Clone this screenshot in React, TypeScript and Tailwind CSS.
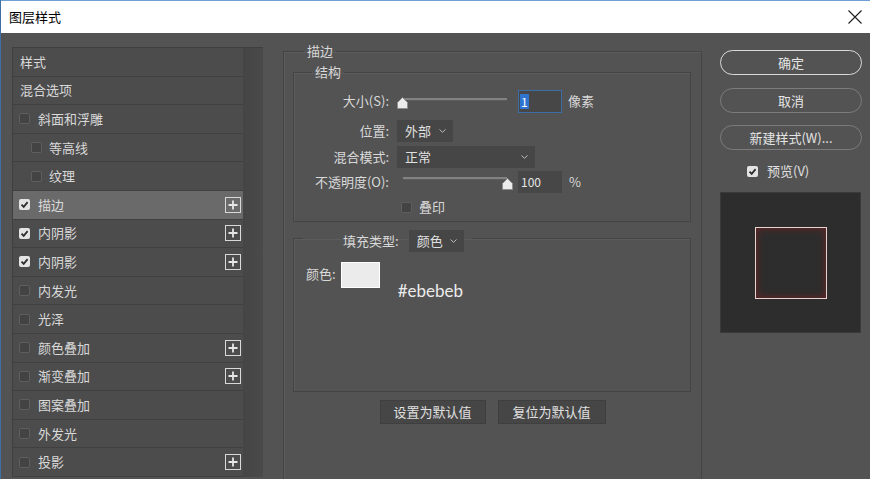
import React from 'react';

type Effect = {
  label: string;
  head?: boolean;
  checked?: boolean;
  indent?: boolean;
  plus?: boolean;
  active?: boolean;
};

const EFFECTS: Effect[] = [
  { label: '样式', head: true },
  { label: '混合选项', head: true },
  { label: '斜面和浮雕' },
  { label: '等高线', indent: true },
  { label: '纹理', indent: true },
  { label: '描边', checked: true, plus: true, active: true },
  { label: '内阴影', checked: true, plus: true },
  { label: '内阴影', checked: true, plus: true },
  { label: '内发光' },
  { label: '光泽' },
  { label: '颜色叠加', plus: true },
  { label: '渐变叠加', plus: true },
  { label: '图案叠加' },
  { label: '外发光' },
  { label: '投影', plus: true },
];

const CheckBox: React.FC<{ checked?: boolean }> = ({ checked }) =>
  checked ? (
    <span className="flex h-[11px] w-[11px] shrink-0 items-center justify-center rounded-[2px] bg-[#e4e4e4]">
      <svg width="9" height="9" viewBox="0 0 9 9">
        <path d="M1.5 4.6 L3.7 6.8 L7.6 2.2" fill="none" stroke="#2e2e2e" strokeWidth="1.8" />
      </svg>
    </span>
  ) : (
    <span className="block h-[11px] w-[11px] shrink-0 rounded-[2px] border border-[#5e5e5e] bg-[#434343]" />
  );

const PlusBox = () => (
  <span className="flex h-[16px] w-[16px] items-center justify-center border-[1.5px] border-[#d8d8d8]">
    <svg width="10" height="10" viewBox="0 0 10 10">
      <path d="M5 0.5 V9.5 M0.5 5 H9.5" stroke="#e6e6e6" strokeWidth="1.8" />
    </svg>
  </span>
);

const Chevron = () => (
  <svg width="7" height="4" viewBox="0 0 7 4">
    <path d="M0.5 0.5 L3.5 3.3 L6.5 0.5" fill="none" stroke="#bdbdbd" strokeWidth="1" />
  </svg>
);

const Thumb = () => (
  <svg width="11" height="12" viewBox="0 0 11 12">
    <polygon points="5.5,0.5 10.5,5.5 10.5,11.5 0.5,11.5 0.5,5.5" fill="#ebebeb" stroke="#8a8a8a" strokeWidth="0.8" />
  </svg>
);

const Dropdown: React.FC<{ text: string; width: string }> = ({ text, width }) => (
  <div className={`flex h-[22px] items-center justify-between bg-[#464646] pl-[8px] pr-[7px] text-[13px] text-[#e0e0e0] ${width}`}>
    <span>{text}</span>
    <Chevron />
  </div>
);

const App: React.FC = () => {
  return (
    <div className="flex h-[479px] w-[870px] flex-col overflow-hidden border-l border-[#3f6fa3] bg-[#535353] font-['Noto_Sans_CJK_SC',sans-serif] text-[13px] leading-[18px] text-[#d9d9d9]">
      {/* title bar */}
      <div className="flex h-[33px] shrink-0 items-center justify-between border-t border-[#6f9fd3] bg-white pl-[8px] pr-[8px]">
        <span className="text-[13px] text-black">图层样式</span>
        <svg width="14" height="14" viewBox="0 0 14 14">
          <path d="M0.5 0.5 L13.5 13.5 M13.5 0.5 L0.5 13.5" stroke="#1f1f1f" strokeWidth="1.1" />
        </svg>
      </div>

      <div className="flex min-h-0 flex-1 items-start">
        {/* effects list */}
        <div className="ml-[11px] mt-[14px] flex w-[251px] border-l border-t border-[#3f3f3f] bg-[#474747]">
          <div className="w-[230px]">
            {EFFECTS.map((e, i) => (
              <div
                key={i}
                className={`flex h-[28.6px] items-center border-b border-[#404040] ${
                  e.active ? 'bg-[#6a6a6a]' : 'bg-[#4c4c4c]'
                } ${e.head ? 'pl-[7px]' : e.indent ? 'pl-[18px]' : 'pl-[6px]'}`}
              >
                {!e.head && <CheckBox checked={e.checked} />}
                <span className={e.head ? '' : e.indent ? 'ml-[7px]' : 'ml-[8px]'}>{e.label}</span>
                {e.plus && (
                  <span className="ml-auto mr-[2px]">
                    <PlusBox />
                  </span>
                )}
              </div>
            ))}
          </div>
          <div className="w-[20px] bg-gradient-to-r from-[#454545] to-[#4a4a4a]" />
        </div>

        {/* settings */}
        <fieldset className="ml-[20px] mt-[9px] h-[470px] w-[419px] shrink-0 border border-[#444444] shadow-[inset_1px_1px_0_#5c5c5c]">
          <legend className="ml-[20px] px-[3px] text-[13px] leading-[18px]">描边</legend>

          <fieldset className="ml-[9px] mt-[3px] w-[398px] border border-[#444444] pb-[6px] shadow-[inset_1px_1px_0_#5c5c5c]">
            <legend className="ml-[18px] px-[3px] leading-[18px]">结构</legend>

            {/* size */}
            <div className="mt-[9px] flex h-[23px] items-start">
              <span className="w-[95px] pt-[2px] text-right">大小(S):</span>
              <div className="ml-[8px] flex h-full items-start">
                <div className="relative h-full w-[121px]">
                  <div className="absolute left-[5px] top-[8px] h-[3px] w-[105px] border-b border-[#5c5c5c] bg-[#828282]" />
                  <div className="absolute left-0 top-[7px]">
                    <Thumb />
                  </div>
                </div>
                <div className="flex h-[23px] w-[44px] items-center border-[1.5px] border-[#3b6ea6] bg-[#474747] pl-[1px]">
                  <span className="bg-[#2f74cf] px-[1px] text-[12px] leading-[15px] text-white">1</span>
                </div>
                <span className="ml-[6px] pt-[2px]">像素</span>
              </div>
            </div>

            {/* position */}
            <div className="mt-[7px] flex h-[22px] items-center">
              <span className="w-[95px] text-right">位置:</span>
              <div className="ml-[8px]">
                <Dropdown text="外部" width="w-[56px]" />
              </div>
            </div>

            {/* blend mode */}
            <div className="mt-[4px] flex h-[22px] items-center">
              <span className="w-[95px] text-right">混合模式:</span>
              <div className="ml-[8px]">
                <Dropdown text="正常" width="w-[138px]" />
              </div>
            </div>

            {/* opacity */}
            <div className="mt-[3px] flex h-[22px] items-start">
              <span className="w-[95px] pt-[2px] text-right">不透明度(O):</span>
              <div className="ml-[8px] flex h-full items-start">
                <div className="relative h-full w-[121px]">
                  <div className="absolute left-[6px] top-[6px] h-[3px] w-[104px] border-b border-[#5c5c5c] bg-[#828282]" />
                  <div className="absolute left-[105px] top-[7px]">
                    <Thumb />
                  </div>
                </div>
                <div className="flex h-[22px] w-[44px] items-center bg-[#474747] pl-[3px] text-[12px] text-[#e6e6e6]">
                  100
                </div>
                <span className="ml-[7px] pt-[2px]">%</span>
              </div>
            </div>

            {/* overprint */}
            <div className="mt-[6px] flex h-[16px] items-center">
              <div className="ml-[107px] flex">
                <CheckBox />
              </div>
              <span className="ml-[7px]">叠印</span>
            </div>
          </fieldset>

          {/* fill */}
          <fieldset className="ml-[9px] mt-[8px] w-[398px] border border-[#444444] shadow-[inset_1px_1px_0_#5c5c5c]">
            <legend className="ml-[9px] flex h-[16px] items-start pl-[40px] pr-[8px]">
              <span className="flex h-[22px] items-center">填充类型:</span>
              <div className="ml-[10px]">
                <Dropdown text="颜色" width="w-[55px]" />
              </div>
            </legend>
            <div className="flex h-[145px] items-start pl-[12px] pt-[16px]">
              <span className="mt-[3px]">颜色:</span>
              <div className="ml-[5px] h-[26px] w-[39px] border-[1.5px] border-white bg-[#ebebeb]" />
              <span className="ml-[18px] mt-[19px] font-['Lato',sans-serif] text-[17px] leading-[20px] text-[#ececec]">
                #ebebeb
              </span>
            </div>
          </fieldset>

          <div className="mt-[8px] flex justify-center gap-[12px]">
            <button className="h-[24px] w-[106px] border border-[#3f3f3f] bg-[#464646] text-[13px] text-[#e0e0e0]">
              设置为默认值
            </button>
            <button className="h-[24px] w-[108px] border border-[#3f3f3f] bg-[#464646] text-[13px] text-[#e0e0e0]">
              复位为默认值
            </button>
          </div>
        </fieldset>

        {/* right column */}
        <div className="ml-[18px] mt-[17px] flex w-[142px] flex-col">
          <button className="h-[25px] rounded-full border-[1.5px] border-[#dadada] text-[13px] text-[#e4e4e4]">确定</button>
          <button className="mt-[13px] h-[25px] rounded-full border-[1.5px] border-[#7c7c7c] text-[13px] text-[#e4e4e4]">取消</button>
          <button className="mt-[12px] h-[25px] rounded-full border-[1.5px] border-[#7c7c7c] text-[13px] text-[#e4e4e4]">
            新建样式(W)...
          </button>
          <div className="mt-[13px] flex h-[16px] items-center pl-[27px]">
            <CheckBox checked />
            <span className="ml-[9px] text-[#e0e0e0]">预览(V)</span>
          </div>
          <div className="mt-[13px] flex h-[141px] w-[141px] items-center justify-center border border-[#3a3a3a] bg-[#2d2d2d]">
            <div className="h-[72px] w-[72px] border border-[#e9d3cf] bg-[#2d2d2d] shadow-[inset_0_0_9px_#6b2424]" />
          </div>
        </div>
      </div>
    </div>
  );
};

export default App;
